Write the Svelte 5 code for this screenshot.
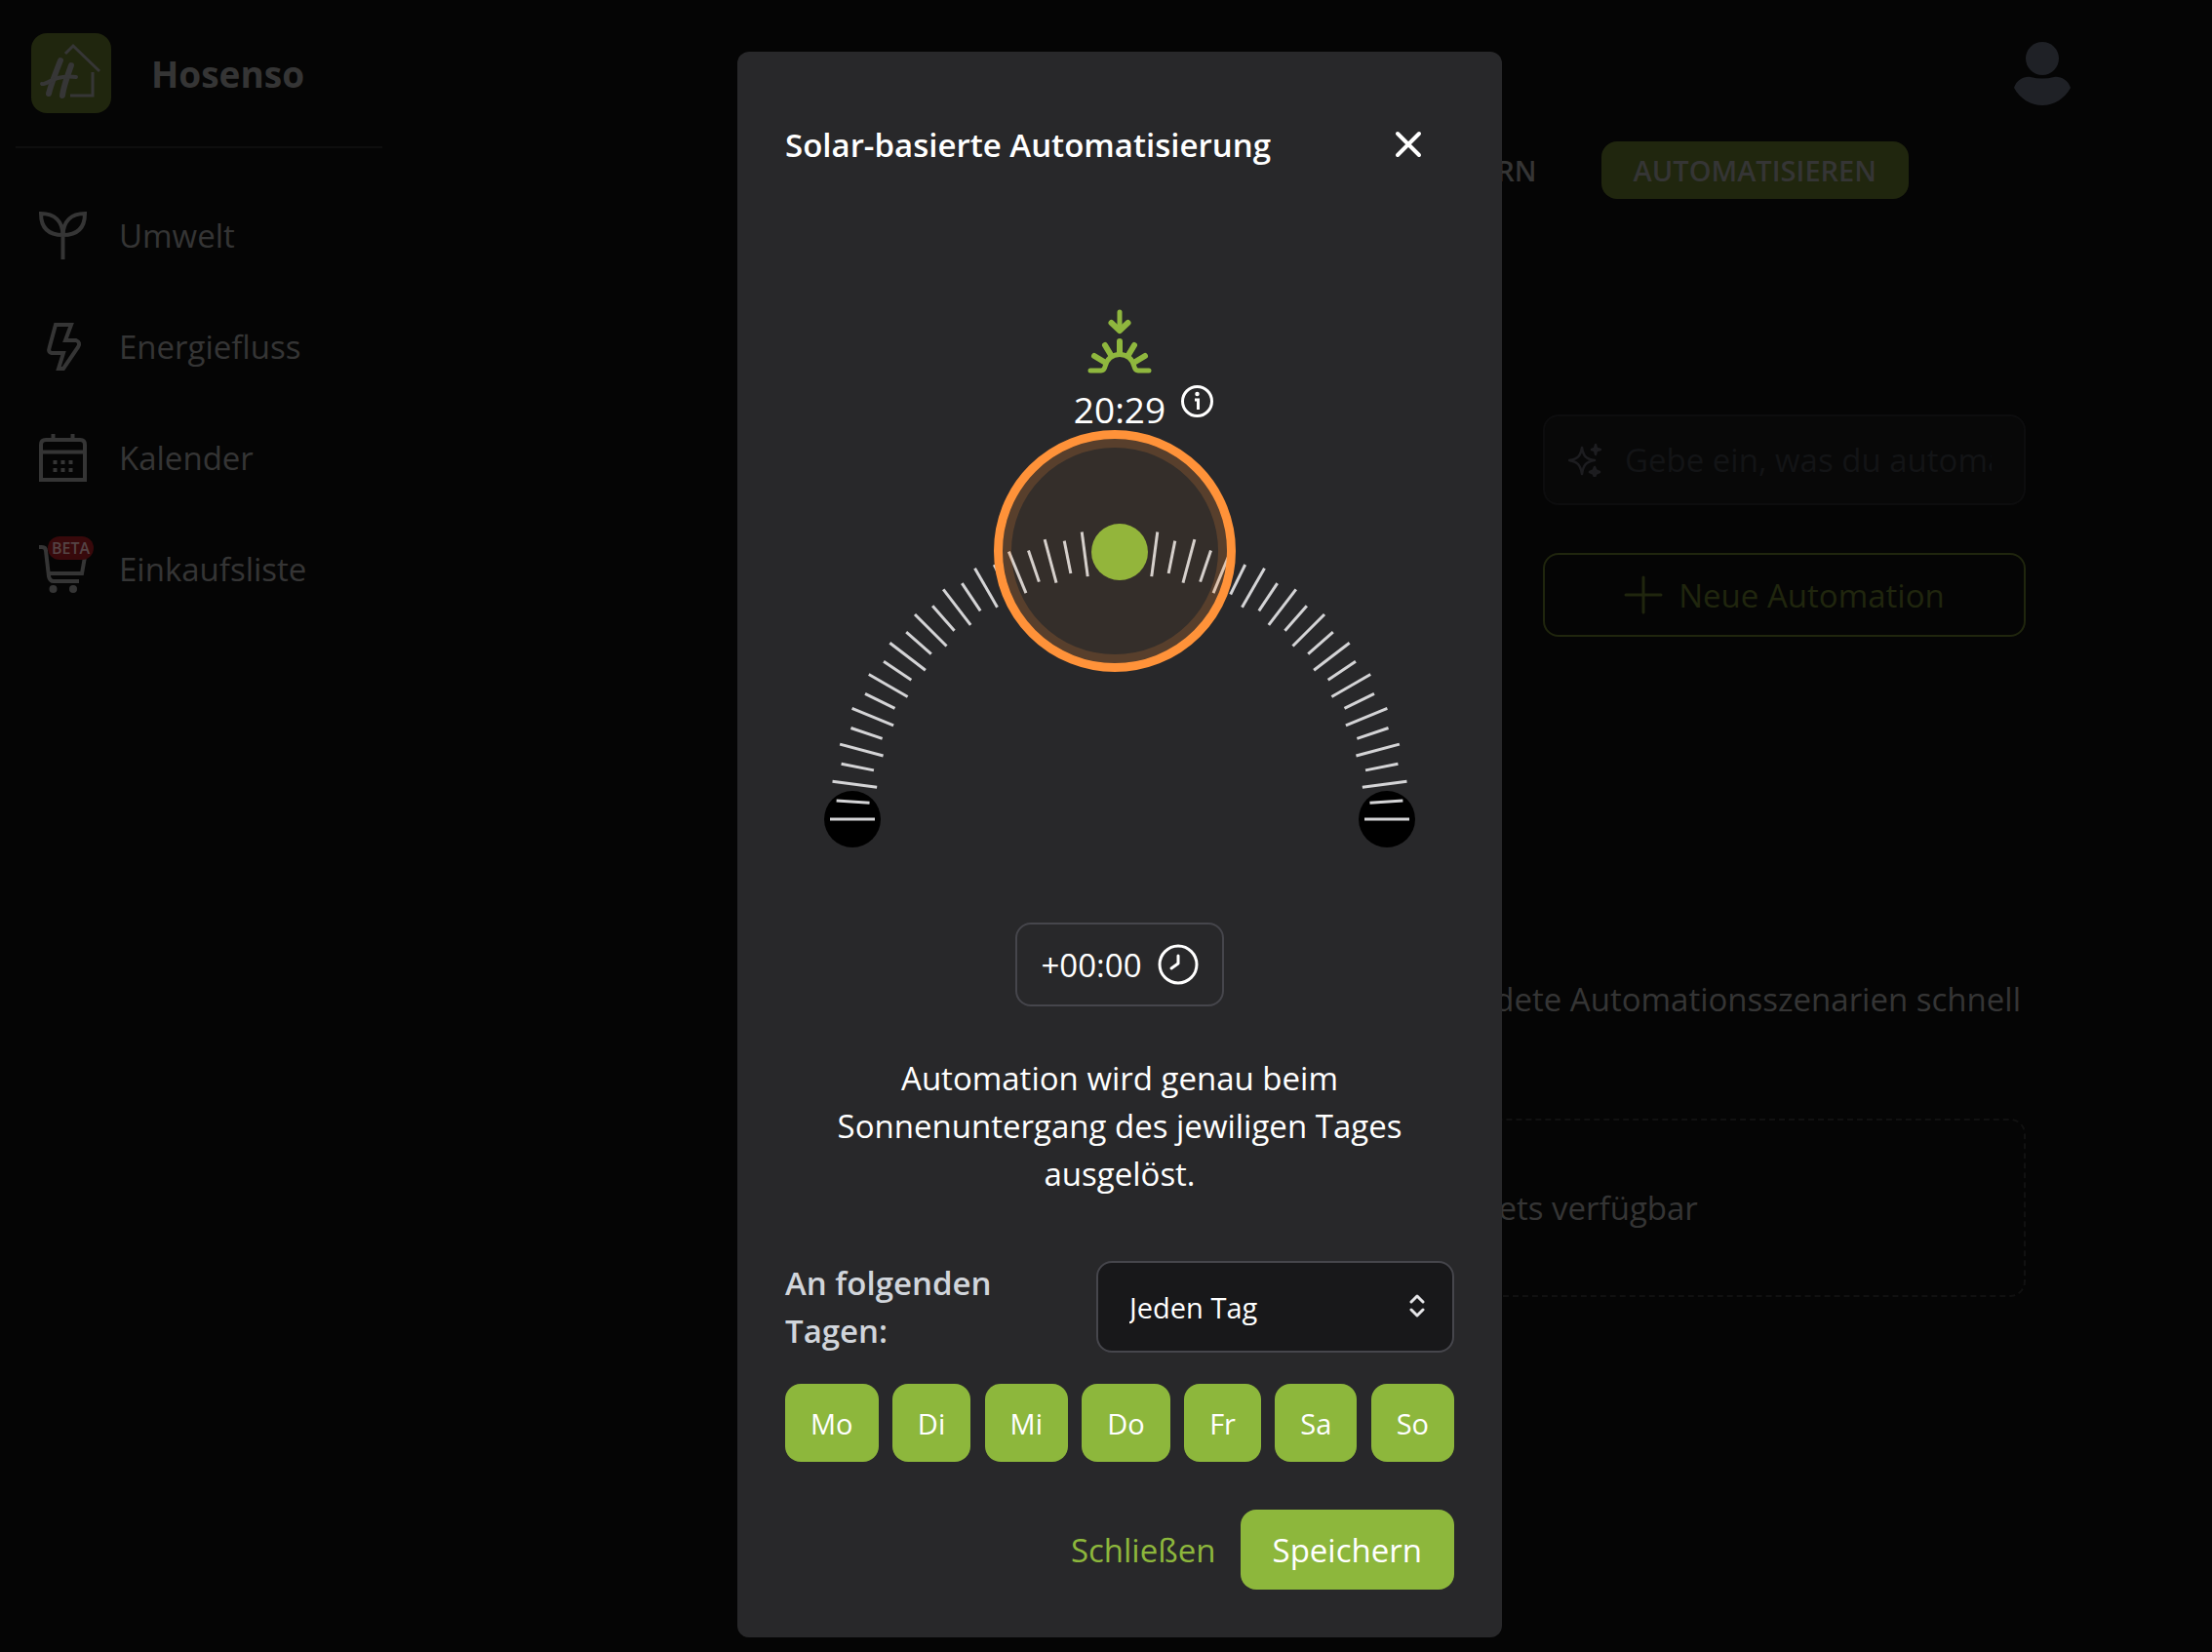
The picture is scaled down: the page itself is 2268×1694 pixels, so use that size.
<script>
  let days = ["Mo", "Di", "Mi", "Do", "Fr", "Sa", "So"].map((name) => ({
    name,
    active: true,
  }));
  let repeat = "Jeden Tag";
  let open = true;
  let prompt = "";

  // dial: half circle, a tick every 3.75 degrees, every second one is long
  const cx = 303;
  const cy = 303;
  const radius = 274;
  const ticks = [];

  for (let i = 0; i <= 48; i++) {
    const angle = (180 - i * 3.75) * (Math.PI / 180);
    const half = i % 2 === 0 ? 23 : 17;
    ticks.push({
      x1: cx + Math.cos(angle) * (radius - half),
      y1: cy - Math.sin(angle) * (radius - half),
      x2: cx + Math.cos(angle) * (radius + half),
      y2: cy - Math.sin(angle) * (radius + half),
    });
  }

  function toggle(day) {
    day.active = !day.active;
    days = days;
  }
</script>

<div class="app">
  <aside class="sidebar">
    <div class="brand">
      <svg class="logo" viewBox="0 0 82 82" fill="none" stroke="#363636">
        <rect width="82" height="82" rx="16" fill="#20260e" stroke="none" />
        <path d="M35 21 L43 13 L70 39" stroke-width="3" />
        <path d="M63 40 V64 H40" stroke-width="3" />
        <g stroke-width="6" stroke-linecap="round" stroke-linejoin="round">
          <path d="M30 28 C26 38 20 54 18 62" />
          <path d="M41 33 C37 44 33 55 32 64" />
          <path d="M11 52 C14 53 20 48 27 46 S40 44 46 45" stroke-width="4" />
        </g>
      </svg>
      <span class="brand-name">Hosenso</span>
    </div>
    <nav>
      <a href="#umwelt">
        <svg class="nav-icon" viewBox="0 0 49 49">
          <path d="M24.500 49 V24 M24.500 24 C9 24 2 16 2 2 C16 2 24 10 24.500 24 C25 10 33 2 47 2 C47 16 40 24 24.500 24" />
        </svg>
        Umwelt
      </a>
      <a href="#energiefluss">
        <svg class="nav-icon" viewBox="0 0 49 49">
          <path d="M17 2 H33 L27 18 H38 Q43 20 40 25 L25 47 H20 L25 31 H13 Q9 30 10.500 26 Z" />
        </svg>
        Energiefluss
      </a>
      <a href="#kalender">
        <svg class="nav-icon" viewBox="0 0 49 49">
          <path d="M2 47 V11 Q2 6 7 6 H42 Q47 6 47 11 V47 Z M2 18.500 H47 M14.500 0 V6 M34.500 0 V6" />
          <path d="M14.500 29 h4 M22.500 29 h4 M30.500 29 h4 M14.500 37 h4 M22.500 37 h4 M30.500 37 h4" />
        </svg>
        Kalender
      </a>
      <a href="#einkaufsliste">
        <span class="cart">
          <svg class="nav-icon" viewBox="0 0 49 49">
            <path d="M0 2 H3 Q7 2 7 6 L10 32 Q11 37 15 37 H41 M9 29 H44 L47 12" />
            <circle class="wheel" cx="14.500" cy="45" r="4" />
            <circle class="wheel" cx="35" cy="45" r="4" />
          </svg>
          <span class="beta">BETA</span>
        </span>
        Einkaufsliste
      </a>
    </nav>
  </aside>

  <div class="page">
    <header>
      <button class="avatar" aria-label="Profil">
        <svg viewBox="0 0 58 65" fill="#1f2126">
          <circle cx="29" cy="17" r="17" />
          <path d="M0 47 C3 38 11 35 17 36 Q29 39 41 36 C47 35 55 38 58 47 C52 58 41 65 29 65 S6 58 0 47 Z" />
        </svg>
      </button>
    </header>
    <div class="tabs">
      <button>STEUERN</button>
      <button class="current">AUTOMATISIEREN</button>
    </div>
    <main>
      <div class="actions">
        <label class="prompt">
          <svg class="sparkle" viewBox="0 0 34 34" fill="none" stroke="#1d1d20" stroke-width="2.500" stroke-linejoin="round">
            <path d="M14 4 C15.500 13 18 15.500 27 17 C18 18.500 15.500 22 14 31 C12.500 22 9.500 18.500 1 17 C9.500 15.500 12.500 13 14 4 Z" />
            <path fill="#1d1d20" d="M28 1 L29 5 L33 6 L29 7 L28 11 L27 7 L24 6 L27 5 Z M27 24 L28.500 27.500 L32 29 L28.500 30.500 L27 34 L25.500 30.500 L22 29 L25.500 27.500 Z" />
          </svg>
          <input type="text" aria-label="Automation beschreiben" placeholder="Gebe ein, was du automatisieren willst" bind:value={prompt} />
        </label>
        <button class="new">
          <svg viewBox="0 0 40 40" stroke="#20260e" stroke-width="3" stroke-linecap="round">
            <path d="M2 20 H38 M20 2 V38" />
          </svg>
          Neue Automation
        </button>
      </div>
      <p class="hint">Füge häufig verwendete Automationsszenarien schnell</p>
      <div class="empty">Keine Widgets verfügbar</div>
    </main>
  </div>
</div>

{#if open}
  <div class="overlay">
    <div class="modal" role="dialog" aria-modal="true" aria-labelledby="modal-title">
      <div class="modal-head">
        <h2 id="modal-title">Solar-basierte Automatisierung</h2>
        <button class="close" aria-label="Fenster schließen" on:click={() => (open = false)}>
          <svg viewBox="0 0 30 30" stroke="#fff" stroke-width="4" stroke-linecap="round">
            <path d="M4 4 L26 26 M26 4 L4 26" />
          </svg>
        </button>
      </div>

      <svg class="sunset" viewBox="0 0 66 66" fill="none" stroke="#8fb73e" stroke-width="5" stroke-linecap="round" stroke-linejoin="round">
        <path d="M33 3 V20" />
        <path d="M24.500 14 L33 22 L41.500 14" stroke-width="6" />
        <path d="M3 63 H14 Q17 63 18 59 C20 51 25 46.500 33 46.500 S46 51 48 59 Q49 63 52 63 H63" />
        <path d="M33 46 V33 M24 47 L18 37 M42 47 L48 37 M17 54 L7 48 M49 54 L59 48" stroke-width="6" />
      </svg>
      <div class="time">
        <span class="time-value">20:29</span>
        <button class="info" aria-label="Info">
          <svg viewBox="0 0 33 33" fill="none" stroke="#fff" stroke-width="3">
            <circle cx="16.500" cy="16.500" r="15" />
            <circle cx="16.500" cy="9" r="1.500" fill="#fff" stroke-width="1.500" />
            <path d="M14 15 H17.500 V25" stroke-width="3" />
          </svg>
        </button>
      </div>

      <div class="dial">
        <svg viewBox="0 0 606 332">
          <circle cx={cx - radius} {cy} r="29" fill="#000" />
          <circle cx={cx + radius} {cy} r="29" fill="#000" />
          {#each ticks as t}
            <line x1={t.x1} y1={t.y1} x2={t.x2} y2={t.y2} stroke="#d4d4d6" stroke-width="3" />
          {/each}
          <circle {cx} cy={cy - radius} r="29" fill="#8db73c" />
        </svg>
        <div class="marker"></div>
      </div>

      <button class="offset">
        +00:00
        <svg viewBox="0 0 42 42" fill="none" stroke="#fff" stroke-width="3" stroke-linecap="round" stroke-linejoin="round">
          <circle cx="21" cy="21" r="19" />
          <path d="M21 12 V20 L14 25" />
        </svg>
      </button>

      <p class="description">
        Automation wird genau beim Sonnenuntergang des jewiligen Tages ausgelöst.
      </p>

      <div class="repeat">
        <label for="repeat">An folgenden Tagen:</label>
        <div class="select">
          <select id="repeat" bind:value={repeat}>
            <option>Jeden Tag</option>
            <option>Werktags</option>
            <option>Wochenende</option>
          </select>
          <svg viewBox="0 0 16 24" fill="none" stroke="#e4e4e7" stroke-width="3" stroke-linecap="round" stroke-linejoin="round">
            <path d="M2 8 L8 2 L14 8 M2 16 L8 22 L14 16" />
          </svg>
        </div>
      </div>

      <div class="days">
        {#each days as day}
          <button class:off={!day.active} aria-pressed={day.active} on:click={() => toggle(day)}>
            {day.name}
          </button>
        {/each}
      </div>

      <div class="modal-foot">
        <button class="cancel" on:click={() => (open = false)}>Schließen</button>
        <button class="save">Speichern</button>
      </div>
    </div>
  </div>
{/if}

<style>
  :global(body) {
    margin: 0;
    background: #050505;
  }

  :global(*) {
    box-sizing: border-box;
  }

  .app,
  .overlay {
    font-family: "Open Sans", "Noto Sans", sans-serif;
    font-size: 33px;
    line-height: 49px;
  }

  button,
  input,
  select {
    font: inherit;
    color: inherit;
    background: none;
    border: 0;
    padding: 0;
    margin: 0;
  }

  button {
    cursor: pointer;
  }

  svg {
    display: block;
    flex-shrink: 0;
  }

  .app {
    display: flex;
    min-height: 100vh;
    color: #353535;
  }

  .sidebar {
    width: 408px;
    padding: 0 16px;
    flex-shrink: 0;
  }

  .brand {
    display: flex;
    align-items: center;
    gap: 41px;
    height: 152px;
    padding: 0 16px;
    border-bottom: 2px solid #0e0e0e;
  }

  .logo {
    width: 82px;
  }

  .brand-name {
    font-size: 37px;
    font-weight: 700;
  }

  nav {
    display: flex;
    flex-direction: column;
    padding: 32px 24px;
  }

  nav a {
    display: flex;
    align-items: center;
    gap: 33px;
    height: 114px;
    font-weight: 500;
    color: inherit;
    text-decoration: none;
  }

  .nav-icon {
    width: 49px;
    height: 49px;
    fill: none;
    stroke: #353535;
    stroke-width: 4;
  }

  .wheel {
    fill: #353535;
    stroke: none;
  }

  .cart {
    position: relative;
  }

  .beta {
    position: absolute;
    top: -9px;
    left: 9px;
    padding: 0 4px;
    border-radius: 12px;
    background: #38090b;
    color: #554445;
    font-size: 16px;
    line-height: 24px;
    font-weight: 600;
  }

  .page {
    flex: 1;
    display: flex;
    flex-direction: column;
    min-width: 0;
  }

  header {
    display: flex;
    justify-content: flex-end;
    padding: 43px 145px 0 0;
  }

  .avatar svg {
    width: 58px;
  }

  .tabs {
    display: flex;
    justify-content: flex-end;
    gap: 33px;
    padding: 37px 311px 0 0;
  }

  .tabs button {
    height: 59px;
    padding: 0 33px;
    border-radius: 16px;
    font-size: 29px;
    font-weight: 600;
  }

  .tabs .current {
    background: #20260e;
  }

  main {
    display: flex;
    flex-direction: column;
    align-items: flex-end;
    padding: 221px 191px 0 0;
  }

  .actions {
    display: flex;
    flex-direction: column;
    gap: 49px;
    width: 495px;
  }

  .prompt {
    display: flex;
    align-items: center;
    gap: 24px;
    height: 93px;
    padding: 0 33px 0 24px;
    border: 2px solid #0d0d0e;
    border-radius: 16px;
    background: #080808;
  }

  .sparkle {
    width: 34px;
  }

  .prompt input {
    flex: 1;
    min-width: 0;
    outline: 0;
  }

  .prompt input::placeholder {
    color: #131416;
    opacity: 1;
  }

  .new {
    display: flex;
    align-items: center;
    justify-content: center;
    gap: 16px;
    height: 86px;
    border: 2px solid #20260e;
    border-radius: 16px;
    color: #20260e;
    font-weight: 500;
  }

  .new svg {
    width: 40px;
  }

  .hint {
    margin: 347px 5px 98px 0;
  }

  .empty {
    display: flex;
    align-items: center;
    justify-content: center;
    width: 1048px;
    height: 183px;
    border: 2px dashed #111;
    border-radius: 16px;
  }

  .overlay {
    position: absolute;
    top: 0;
    left: 0;
    width: 100%;
    display: flex;
    justify-content: center;
    padding: 53px 0 16px 28px;
    color: #fff;
  }

  .modal {
    display: flex;
    flex-direction: column;
    width: 784px;
    padding: 49px;
    border-radius: 12px;
    background: #28282a;
  }

  .modal-head {
    display: flex;
    align-items: center;
    justify-content: space-between;
    height: 92px;
    padding-right: 32px;
  }

  h2 {
    margin: 0;
    font-size: inherit;
    font-weight: 600;
  }

  .close svg {
    width: 30px;
  }

  .sunset {
    width: 66px;
    margin: 123px auto 12px;
  }

  .time {
    display: grid;
    grid-template-columns: 1fr auto 1fr;
    align-items: start;
  }

  .time-value {
    grid-column: 2;
    font-size: 37px;
  }

  .info {
    margin-left: 16px;
    justify-self: start;
  }

  .info svg {
    width: 33px;
  }

  .dial {
    position: relative;
    width: 606px;
    margin: 93px auto 77px;
  }

  /* click marker over the knob */
  .marker {
    position: absolute;
    top: -96px;
    left: 174px;
    width: 248px;
    height: 248px;
    border: 9px solid #ff9239;
    border-radius: 50%;
    background: rgba(255, 145, 55, 0.06);
    box-shadow: inset 0 0 0 9px rgba(255, 145, 55, 0.18);
    pointer-events: none;
  }

  .offset {
    display: flex;
    align-items: center;
    align-self: center;
    gap: 16px;
    height: 86px;
    padding: 0 24px;
    border: 2px solid #46464c;
    border-radius: 16px;
    font-weight: 500;
  }

  .offset svg {
    width: 42px;
  }

  .description {
    margin: 49px 49px 63px;
    text-align: center;
  }

  .repeat {
    display: flex;
    align-items: center;
    justify-content: space-between;
  }

  .repeat label {
    width: 260px;
    color: #d1d5db;
    font-weight: 600;
  }

  .select {
    position: relative;
    width: 367px;
  }

  .select select {
    appearance: none;
    width: 100%;
    height: 94px;
    padding: 0 32px;
    border: 2px solid #46464c;
    border-radius: 16px;
    background: #18181a;
    font-size: 29px;
  }

  .select svg {
    position: absolute;
    top: 34px;
    right: 30px;
    width: 16px;
    pointer-events: none;
  }

  .days {
    display: flex;
    justify-content: space-between;
    margin: 30px 0 49px;
  }

  .days button {
    height: 80px;
    padding: 0 26px;
    border-radius: 16px;
    background: #8db73c;
    font-size: 29px;
  }

  .days .off {
    background: #46464c;
  }

  .modal-foot {
    display: flex;
    justify-content: flex-end;
    gap: 25px;
  }

  .cancel {
    color: #8db73c;
  }

  .save {
    height: 82px;
    padding: 0 33px;
    border-radius: 16px;
    background: #8db73c;
    font-weight: 500;
  }
</style>
